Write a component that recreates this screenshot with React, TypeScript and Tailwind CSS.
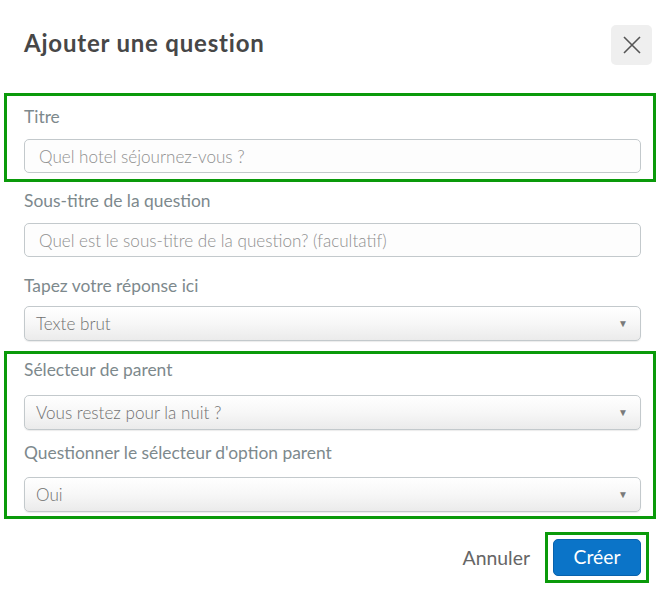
import React from "react";

const Label = ({ children }: { children: React.ReactNode }) => (
  <div className="h-6 text-[17.4px] leading-6 text-[#7d898d]">{children}</div>
);

const TextInput = ({ placeholder }: { placeholder: string }) => (
  <input
    placeholder={placeholder}
    className="block w-full h-[34px] rounded-[5px] border border-[#c3c9cc] bg-[#fdfdfd] px-[14px] text-[17.1px] font-light text-[#555] placeholder:text-[#8f8f8f] outline-none"
  />
);

const Select = ({ value }: { value: string }) => (
  <div className="flex h-[35px] w-full items-center justify-between rounded-[5px] border border-[#c3c9cc] bg-gradient-to-b from-white via-[#f7f7f7] to-[#ebebeb] pl-[11px] pr-[12px] shadow-[0_1px_1px_rgba(0,0,0,0.08)]">
    <span className="text-[17.1px] font-light text-[#707070]">{value}</span>
    <span className="text-[10px] text-[#7a7a7a]">▼</span>
  </div>
);

export default function App() {
  return (
    <div className="w-[666px] h-[601px] bg-white font-['Lato',sans-serif]">
      {/* Header */}
      <div className="flex items-start justify-between pl-6 pr-[14px] pt-[25px]">
        <h2 className="mt-[4px] text-[24px] font-bold leading-7 tracking-[0.8px] text-[#474747]">
          Ajouter une question
        </h2>
        <button className="flex h-10 w-[41px] items-center justify-center rounded-[5px] bg-[#efefef]">
          <svg width="20" height="20" viewBox="0 0 20 20" fill="none" stroke="#555" strokeWidth="1.6">
            <path d="M2 2 L18 18 M18 2 L2 18" />
          </svg>
        </button>
      </div>

      {/* Titre */}
      <div className="ml-[4px] mt-[28px] w-[652px] border-[3px] border-[#0a9a0a] pl-[17px] pr-[12px] pt-[9px] pb-[6px]">
        <Label>Titre</Label>
        <div className="mt-[10px]">
          <TextInput placeholder="Quel hotel séjournez-vous ?" />
        </div>
      </div>

      <div className="pl-6 pr-[25px]">
        <div className="mt-[7px]">
          <Label>Sous-titre de la question</Label>
        </div>
        <div className="mt-[10px]">
          <TextInput placeholder="Quel est le sous-titre de la question? (facultatif)" />
        </div>
        <div className="mt-[17px]">
          <Label>Tapez votre réponse ici</Label>
        </div>
        <div className="mt-[8px]">
          <Select value="Texte brut" />
        </div>
      </div>

      {/* Parent */}
      <div className="ml-[4px] mt-[10px] w-[652px] border-[3px] border-[#0a9a0a] pl-[17px] pr-[12px] pt-[4px] pb-[4px]">
        <Label>Sélecteur de parent</Label>
        <div className="mt-[13px]">
          <Select value="Vous restez pour la nuit ?" />
        </div>
        <div className="mt-[11px]">
          <Label>Questionner le sélecteur d'option parent</Label>
        </div>
        <div className="mt-[12px]">
          <Select value="Oui" />
        </div>
      </div>

      {/* Footer */}
      <div className="mt-[13px] flex items-center justify-end gap-[15px] pr-[17px]">
        <button className="text-[19.4px] text-[#666]">Annuler</button>
        <div className="border-[3px] border-[#0a9a0a] px-[5px] pt-[4px] pb-[4px]">
          <button className="h-[37px] w-[88px] rounded-[5px] border border-[#0862ad] bg-[#0b74c8] text-[19.3px] text-white">
            Créer
          </button>
        </div>
      </div>
    </div>
  );
}
